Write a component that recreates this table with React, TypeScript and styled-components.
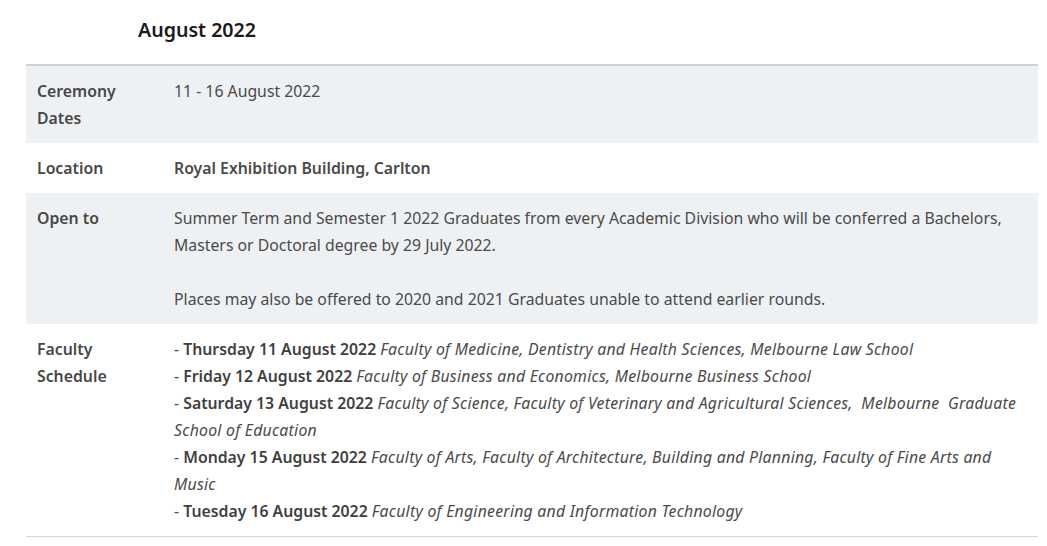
import styled, { createGlobalStyle } from "styled-components";

const Global = createGlobalStyle`
  html, body { margin: 0; padding: 0; background: #ffffff; }
  body {
    font-family: "Noto Sans", "Open Sans", sans-serif;
    color: #4a4a4a;
  }
`;

const Page = styled.div`
  padding: 16px 9px 0 26px;
`;

const Heading = styled.h2`
  margin: 0 0 20px 112px;
  font-size: 19.6px;
  line-height: 28px;
  font-weight: 600;
  color: #1a1a1a;
`;

const Table = styled.table`
  width: 1012px;
  border-collapse: collapse;
  table-layout: fixed;
  border-top: 2px solid #cfcfcf;
  border-bottom: 1px solid #d6d6d6;
  font-size: 15.8px;
  line-height: 27px;
`;

const Row = styled.tr<{ $shaded?: boolean }>`
  background: ${(p) => (p.$shaded ? "#eef1f4" : "#ffffff")};
`;

const Label = styled.th`
  width: 115px;
  padding: 12px 11px 11px;
  text-align: left;
  vertical-align: top;
  font-weight: 600;
  color: #474747;
`;

const Value = styled.td<{ $strong?: boolean }>`
  padding: 12px 11px 11px;
  vertical-align: top;
  font-weight: ${(p) => (p.$strong ? 600 : 400)};
`;

const Para = styled.p`
  margin: 0;
  & + & {
    margin-top: 27px;
  }
`;

const Line = styled.div``;

const Day = styled.strong`
  font-weight: 600;
  color: #3f3f3f;
`;

const Faculties = styled.em`
  font-style: italic;
  letter-spacing: 0.25px;
`;

const schedule = [
  { day: "Thursday 11 August 2022", text: "Faculty of Medicine, Dentistry and Health Sciences, Melbourne Law School" },
  { day: "Friday 12 August 2022", text: "Faculty of Business and Economics, Melbourne Business School" },
  {
    day: "Saturday 13 August 2022",
    text: "Faculty of Science, Faculty of Veterinary and Agricultural Sciences,\u00a0 Melbourne\u00a0 Graduate School of Education",
  },
  {
    day: "Monday 15 August 2022",
    text: "Faculty of Arts, Faculty of Architecture, Building and Planning, Faculty of Fine Arts and Music",
  },
  { day: "Tuesday 16 August 2022", text: "Faculty of Engineering and Information Technology" },
];

export default function App() {
  return (
    <>
      <Global />
      <Page>
        <Heading>August 2022</Heading>
        <Table>
          <tbody>
            <Row $shaded>
              <Label>Ceremony Dates</Label>
              <Value>11 - 16 August 2022</Value>
            </Row>
            <Row>
              <Label>Location</Label>
              <Value $strong>Royal Exhibition Building, Carlton</Value>
            </Row>
            <Row $shaded>
              <Label>Open to</Label>
              <Value>
                <Para>
                  Summer Term and Semester 1 2022 Graduates from every Academic Division who will be conferred a
                  Bachelors, Masters or Doctoral degree by 29 July 2022.
                </Para>
                <Para>Places may also be offered to 2020 and 2021 Graduates unable to attend earlier rounds.</Para>
              </Value>
            </Row>
            <Row>
              <Label>Faculty Schedule</Label>
              <Value>
                {schedule.map(({ day, text }) => (
                  <Line key={day}>
                    - <Day>{day}</Day> <Faculties>{text}</Faculties>
                  </Line>
                ))}
              </Value>
            </Row>
          </tbody>
        </Table>
      </Page>
    </>
  );
}
